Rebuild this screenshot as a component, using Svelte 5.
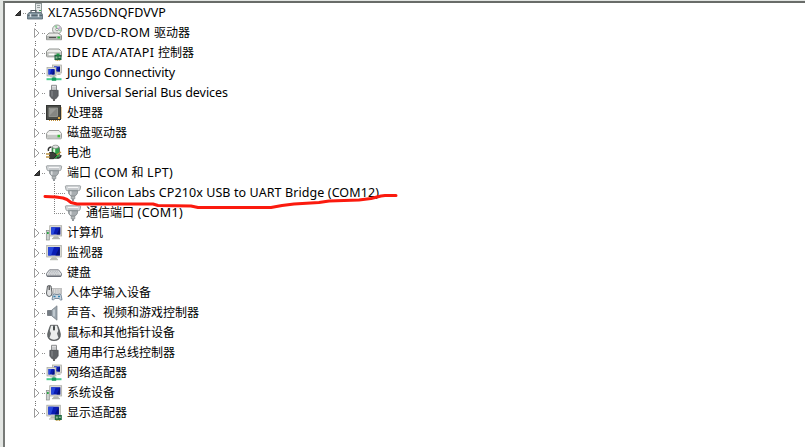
<script>
  const rows = [
    { level: 0, icon: 'root', text: 'XL7A556DNQFDVVP', w: 118 },
    { level: 1, icon: 'dvd', text: 'DVD/CD-ROM 驱动器', w: 123 },
    { level: 1, icon: 'ide', text: 'IDE ATA/ATAPI 控制器', w: 127 },
    { level: 1, icon: 'network', text: 'Jungo Connectivity', w: 108 },
    { level: 1, icon: 'usb', text: 'Universal Serial Bus devices', w: 161 },
    { level: 1, icon: 'cpu', text: '处理器' },
    { level: 1, icon: 'disk', text: '磁盘驱动器' },
    { level: 1, icon: 'battery', text: '电池' },
    { level: 1, icon: 'port', text: '端口 (COM 和 LPT)', w: 106, open: true },
    { level: 2, icon: 'port', text: 'Silicon Labs CP210x USB to UART Bridge (COM12)', w: 293 },
    { level: 2, icon: 'port', text: '通信端口 (COM1)', w: 97, last: true },
    { level: 1, icon: 'computer', text: '计算机' },
    { level: 1, icon: 'monitor', text: '监视器' },
    { level: 1, icon: 'keyboard', text: '键盘' },
    { level: 1, icon: 'hid', text: '人体学输入设备' },
    { level: 1, icon: 'sound', text: '声音、视频和游戏控制器' },
    { level: 1, icon: 'mouse', text: '鼠标和其他指针设备' },
    { level: 1, icon: 'usb', text: '通用串行总线控制器' },
    { level: 1, icon: 'network', text: '网络适配器' },
    { level: 1, icon: 'computer', text: '系统设备' },
    { level: 1, icon: 'display', text: '显示适配器', end: true }
  ];
  const parts = (t) => t.match(/[\u3000-\u9fff]+|[^\u3000-\u9fff]+/g);
  const isCjk = (t) => /[\u3000-\u9fff]/.test(t);

  // Spread the difference to the row's nominal width over its Latin letters.
  function fit(node, width) {
    if (!width) return;
    const latin = [...node.querySelectorAll('.latin')];
    const count = latin.reduce((n, el) => n + el.textContent.length, 0);
    const gap = (width - node.getBoundingClientRect().width) / count;
    for (const el of latin) el.style.letterSpacing = `${gap}px`;
  }
</script>

{#snippet screen(x, y, w, h)}
  <rect {x} {y} width={w} height={h} fill="#dcdcd5" stroke="#a5a69f" stroke-width=".7" />
  <rect x={x + 1.5} y={y + 1.5} width={w - 3} height={h - 3} fill="#0a1cb4" />
  <path d="M{x + 1.5} {y + 1.5}h{(w - 3) * 0.5}l-{w * 0.2} {h - 3}h-{(w - 3) * 0.5 - w * 0.2}z" fill="#2848dc" />
  <path d="M{x + w - 1.5} {y + 1.5}v{h - 3}h-{w * 0.3}z" fill="#06107c" />
{/snippet}

{#snippet board(x, y)}
  <rect {x} {y} width="7" height="5" fill="#1d6540" />
  <path d="M{x + 1} {y + 1.5}h2v2h-2zM{x + 4} {y + 1.5}h2v1.5h-2z" fill="#8dbb95" />
  <path d="M{x + 1} {y + 5.4}h5" stroke="#b5953b" stroke-dasharray="1 .6" />
{/snippet}

{#snippet glyph(name)}
  <svg class="icon" viewBox="0 0 16 16">
    {#if name === 'root'}
      <rect x="8.5" y="-1.5" width="6" height="11" fill="#e5e8e8" stroke="#8f9898" />
      <path d="M10 .5h3M10 2.5h3" stroke="#9aa3a3" /><path d="M12 5.5h2" stroke="#3aa64c" />
      <path d="M4 7.500V5.500h5v2" fill="none" stroke="#505b61" stroke-width="1.2" />
      <path d="M2 7.500h12l1.500 2v4.500H.5V9.500z" fill="#8497a1" stroke="#566670" stroke-width=".8" />
      <path d="M1 10.300h14" stroke="#4d5c66" /><path d="M3.500 9v3M11.500 9v3" stroke="#d9e1e5" stroke-width="1.500" />
    {:else if name === 'dvd'}
      <circle cx="11" cy="4.500" r="4.500" fill="#e5e8e5" stroke="#8f948f" stroke-width=".9" />
      <path d="M11 4.500 8.500 1.300l2.500-1zM11 4.500l3.400 2 .6-2z" fill="#8ed39d" /><path d="m11 4.500 3-3 1 2z" fill="#c5a6db" />
      <circle cx="11" cy="4.500" r="1.300" fill="#fff" stroke="#777" stroke-width=".7" />
      <path d="M3 8h9l3.500 2.500v4.200H.5v-4.200z" fill="#e8e8e6" stroke="#858885" stroke-width=".9" />
      <path d="M1 11h14v3.300H1z" fill="#b5b8b5" /><path d="M3 12.500h7" stroke="#505250" stroke-width="1.200" /><path d="M11.500 12.500h2.500" stroke="#27bd38" stroke-width="1.800" />
    {:else if name === 'ide'}
      <path d="M3 4h10l2.500 2.300V11q0 .8-1 .8h-13q-1 0-1-.8V6.300z" fill="#ededeb" stroke="#858885" stroke-width=".9" />
      <path d="M1.200 7.200h13.600v3.800H1.200z" fill="#b6b9b5" /><path d="M2.500 8.500h6v1.800h-6z" fill="#fff" />
      {@render board(8.5, 10)}
      <path d="M10.500 8.500h3v2h-3z" fill="#209e44" />
    {:else if name === 'network'}
      {@render screen(6.5, 0, 9, 8)}
      {@render screen(1, 2.5, 9, 8.5)}
      <path d="M4 11.300h4v1H4zM12 8.500h2.500v1.500H11z" fill="#b5b9b5" />
      <path d="M8 10.500v3" stroke="#9da39f" stroke-width="1.400" /><path d="M.5 14.200h15" stroke="#4ccc8e" stroke-width="2" /><path d="M5.800 12.500h4.400v3.300H5.800z" fill="#169d5d" />
    {:else if name === 'usb'}
      <path d="M5.500.3h5v5h-5z" fill="#dfe0e1" stroke="#8b8d8f" /><path d="M7 2v2M9 2v2" stroke="#a5a7a9" stroke-width=".8" />
      <path d="M3.800 5.300h8.400v5.700l-2.200 2.800H6L3.800 11z" fill="#606366" stroke="#424548" stroke-width=".6" />
      <path d="M6 6v5.500" stroke="#8d9093" /><path d="M8 13.500V16" stroke="#555" stroke-width="1.800" />
    {:else if name === 'cpu'}
      <path d="M15.400 2.500V14M3 15.400h11.500" stroke="#c49036" stroke-width="1.200" stroke-dasharray="1 1" />
      <rect x=".5" y=".5" width="14" height="14" fill="#4b4d49" stroke="#343633" />
      <rect x="3" y="3" width="8.500" height="8.500" fill="#858682" stroke="#a6a8a2" stroke-width=".7" /><path d="M4 4h6L4 10z" fill="#9b9c98" /><path d="M12 12h2v2h-2z" fill="#e9b143" />
    {:else if name === 'disk'}
      <path d="M3 5.500h10l2.500 3v4.300q0 1-1 1h-13q-1 0-1-1V8.500z" fill="#eeeeec" stroke="#909290" stroke-width=".9" />
      <path d="M1 9.500h14v3.300q-7 1.500-14 0z" fill="#c5c7c4" /><path d="M2 9h12" stroke="#fff" /><path d="M11.500 9.800H14v2.500h-2.500z" fill="#36bc32" />
    {:else if name === 'battery'}
      <rect x="6" y="1" width="7.500" height="12.500" rx="2.800" fill="#2f9f47" stroke="#526058" stroke-width=".8" />
      <ellipse cx="9.500" cy="1.800" rx="3.100" ry="1.700" fill="#e1e5e2" stroke="#777" stroke-width=".6" />
      <path d="M8.200 3.700v4" stroke="#e0fadd" stroke-width="2" /><path d="M2.500 6Q1.500 2.500 5.500 2M11 12.500q3 1.500 4-2.500" fill="none" stroke="#333" stroke-width="1.500" />
      <path d="M3.500 7.500h4l3.500 2.500-3.500 3.700h-4z" fill="#3b3e3b" stroke="#191b19" stroke-width=".8" /><path d="M0 9h4M0 12h4M10.500 10l4.500-3" stroke="#bc9341" stroke-width="1.300" />
    {:else if name === 'port'}
      <path d="M1 .8h14q.7 0 .6.8l-.6 3q-.2 1-1.200 1H2.200q-1 0-1.200-1l-.6-3Q.300.800 1 .8z" fill="#d6d9db" stroke="#92979a" stroke-width=".9" />
      <path d="M3 2.500h10" stroke="#f5f6f6" stroke-width="1.300" /><path d="M3.500 4h9" stroke="#8b9194" stroke-width=".9" stroke-dasharray="1 1" />
      <path d="M3.300 5.800h9.400l-.5 3-2.200 2.400H6L3.800 8.800z" fill="#a9aeb1" stroke="#80868a" stroke-width=".8" /><path d="M5.800 6.300v3.500" stroke="#e8eaeb" stroke-width="1.300" />
      <path d="M6.200 11.200h3.600v2.600H6.200z" fill="#b5b9bb" stroke="#858b8e" stroke-width=".7" /><path d="M8 13.800V16" stroke="#8a9093" stroke-width="1.800" />
    {:else if name === 'computer'}
      <rect x="0.300" y="5.500" width="3" height="9.500" fill="#cdd1cf" stroke="#868c89" stroke-width=".7" /><path d="M1 8h1.700" stroke="#27a844" stroke-width="2" />
      {@render screen(3.7, 0.7, 12, 10.3)}
      <path d="M8 11.300h4l1.500 2H6.500z" fill="#b3b6b0" /><path d="M6 13.700h8" stroke="#a5a8a3" />
    {:else if name === 'monitor'}
      {@render screen(0.7, 0.5, 14.6, 11.5)}
      <path d="M6 12.300h4l1.800 2H4.200z" fill="#b8bab2" /><path d="M4 14.700h8" stroke="#b0b2aa" />
    {:else if name === 'keyboard'}
      <path d="M3.500 4.800h9l3 3.700v1.800q0 1.200-1.400 1.200H1.900q-1.400 0-1.400-1.200V8.500z" fill="#dcdee0" stroke="#747880" stroke-width=".9" />
      <path d="M4 6.300h8M3 7.800h10M2.200 9.300h11.600" stroke="#aeb2b7" stroke-dasharray="1 .7" /><path d="M1 11h14" stroke="#5d6169" />
    {:else if name === 'hid'}
      <rect x="5.500" y="3.500" width="10" height="5.500" fill="#e4e4e4" stroke="#aaa" stroke-width=".7" /><path d="M7 5h8M7 7h8" stroke="#999" stroke-dasharray="1 .8" />
      <path d="M1.500 1q1.800-1 3.500 0l1 7q0 3.500-2.800 3.500T.5 8z" fill="#e2e3e4" stroke="#4c5053" stroke-width=".9" /><path d="M3.200 1v4" stroke="#444" stroke-width="1.200" />
      <path d="M7 9.500q1.200-1 3 0h2q2-1 3 0l1 5.300q-1.500 1-3-1.300H9q-2 2.300-3 1z" fill="#ccd5de" stroke="#60768a" stroke-width=".8" /><path d="M7.500 11.500h2M12 11.500h2" stroke="#2e82b2" stroke-width="1.500" />
    {:else if name === 'sound'}
      <path d="M1.500 5.500h4v5h-4z" fill="#737b82" stroke="#50575e" stroke-width=".6" /><path d="M5.500 5.300 11 .8v14.400l-5.500-4.500z" fill="#9ca6ae" stroke="#747d84" stroke-width=".7" /><path d="M8 4.500v7" stroke="#cdd5da" stroke-width="1.500" />
    {:else if name === 'mouse'}
      <path d="M4.500.3h7q1.800 4 2.800 8.400.7 6.700-6.300 6.900Q1 15.400 1.700 8.700 3 4 4.500.3z" fill="#686c6e" stroke="#4b4f50" stroke-width=".8" />
      <path d="M5 .8h2l.5 5h1l.5-5h2l1.200 5L11 8.500l1.500 4.500q-4.500 3.300-9 0L5 8.500 3.800 5.800z" fill="#eceeed" /><path d="M8 1.500v3.500" stroke="#34393a" stroke-width="1.500" />
    {:else if name === 'display'}
      {@render screen(0.8, 0.2, 13.5, 10.8)}
      <path d="M5 11.300h4v2H4z" fill="#b8bab2" /><path d="M3 14h6" stroke="#a6a89f" />
      {@render board(8.8, 10)}
    {/if}
  </svg>
{/snippet}

<main>
  <ul>
    {#each rows as row}
      <li class="level{row.level}" class:last={row.last}>
        {#if row.level === 2}
          <span class="trunk"></span><span class="branch"></span>
        {:else}
          <svg class="arrow" viewBox="0 0 9 20">
            {#if row.level === 1}
              <path class="dots" d={row.end ? 'M2.5 0v1M2.5 2v1' : 'M2.5 0v1M2.5 2v1M2.5 18v1'} />
            {/if}
            {#if row.level === 0 || row.open}
              <path d="M6.500 7.500v5h-5z" fill="#404040" stroke="#262626" />
            {:else}
              <path d="M1.500 5.500v9l4.500-4.500z" fill="#fff" stroke="#9c9c9c" />
            {/if}
          </svg>
          <span class="lead"></span>
        {/if}
        {@render glyph(row.icon)}
        <span class="label" use:fit={row.w}>{#each parts(row.text) as part}<span class={isCjk(part) ? 'cjk' : 'latin'}>{part}</span>{/each}</span>
      </li>
    {/each}
  </ul>
  <svg class="marker" viewBox="0 0 360 20">
    <path d="M2 7.500 13 8l7 1 4 1.500 4 3 6 1.500h76l5 1.500 33 .5 7 1.500h73l11-2 12-1.500 25-1.500 10-1.500 30-1 12-1.500 10-2.500 4-.5h11" />
  </svg>
</main>

<style>
  :global(body) { margin: 0; background: #fff; }
  main {
    position: relative;
    box-sizing: border-box;
    width: 805px;
    height: 447px;
    overflow: hidden;
    background: #fff;
    border-top: 1px solid #e3e6e3;
    border-left: 3px solid #e3e6e3;
  }
  ul {
    box-sizing: border-box;
    height: 446px;
    margin: 0;
    padding: 0;
    list-style: none;
    border-top: 2px solid #696c69;
    border-left: 2px solid #777a77;
  }
  li { display: flex; height: 20px; align-items: center; }
  .level0 { padding-left: 9px; }
  .level1 { padding-left: 28px; }
  .level2 { padding-left: 30px; }
  .arrow { width: 9px; height: 20px; flex: none; }
  .dots { fill: none; stroke: #707070; }
  .lead { width: 4px; height: 1px; background: repeating-linear-gradient(90deg, #909090 0 1px, #fff 1px 2px); }
  .icon { width: 16px; height: 16px; flex: none; overflow: visible; }
  .trunk { width: 19px; height: 20px; background: repeating-linear-gradient(#808080 0 1px, #fff 1px 2px) 0 0 / 1px 20px no-repeat; }
  .branch {
    width: 11px;
    height: 20px;
    background:
      repeating-linear-gradient(#808080 0 1px, #fff 1px 2px) 0 0 / 1px 20px no-repeat,
      repeating-linear-gradient(90deg, #909090 0 1px, #fff 1px 2px) 0 10px / 11px 1px no-repeat;
  }
  .last .branch { background-size: 1px 11px, 11px 1px; }
  .label {
    height: 18px;
    margin-left: 5px;
    color: #000;
    font: 12.5px/18px "Noto Sans", "Noto Sans CJK SC", sans-serif;
    white-space: pre;
  }
  .cjk { font: 12px/1 "Noto Sans CJK SC", sans-serif; }
  .marker { position: absolute; left: 40px; top: 188px; width: 360px; height: 20px; }
  .marker path { fill: none; stroke: #fb1a0e; stroke-width: 3; stroke-linecap: round; stroke-linejoin: round; }
</style>
